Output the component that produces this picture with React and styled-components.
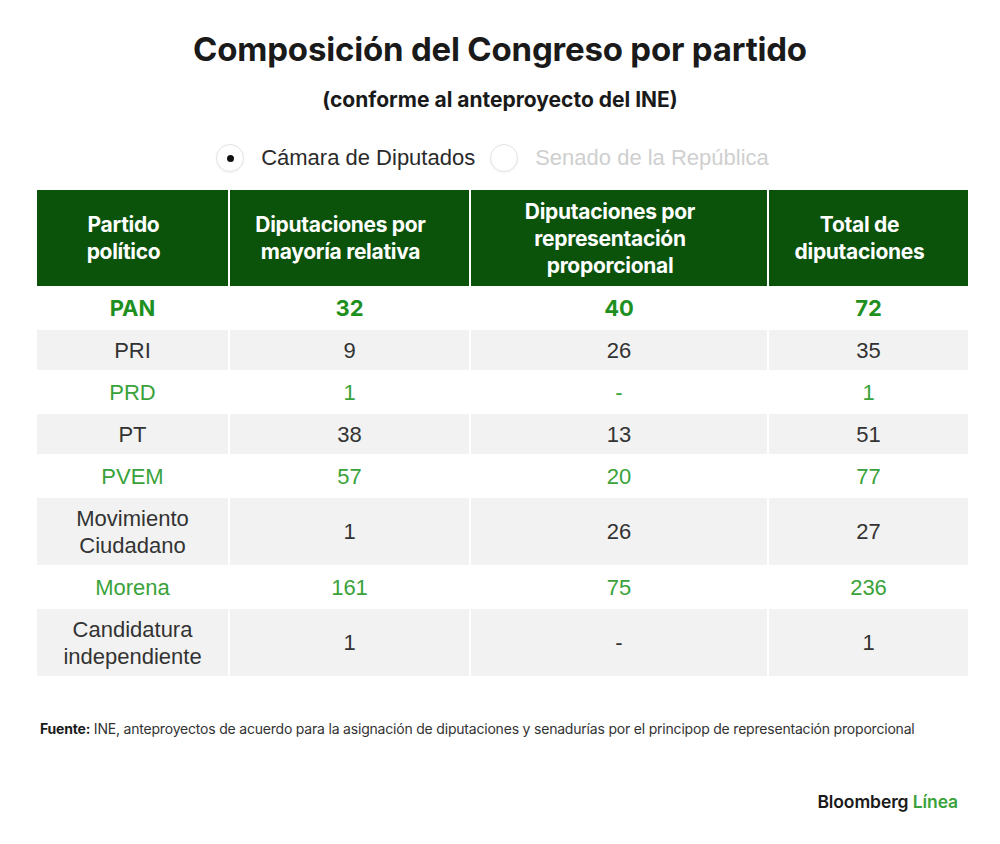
import React, { useState } from 'react';
import styled, { createGlobalStyle } from 'styled-components';

const GlobalStyle = createGlobalStyle`
  body {
    margin: 0;
    background: #fff;
    font-family: 'Liberation Sans', Arial, sans-serif;
  }
`;

const Page = styled.div`
  width: 1000px;
  padding-top: 29px;
  display: flex;
  flex-direction: column;
  align-items: center;
`;

const Title = styled.h1`
  font-family: Inter, 'Liberation Sans', sans-serif;
  font-size: 33px;
  font-weight: 700;
  letter-spacing: -0.2px;
  line-height: 40px;
  color: #1a1a1a;
  margin: 0;
`;

const Subtitle = styled.h2`
  font-family: Inter, 'Liberation Sans', sans-serif;
  font-size: 21px;
  font-weight: 700;
  letter-spacing: 0;
  line-height: 26px;
  color: #1a1a1a;
  margin: 18px 0 0;
`;

const Toggle = styled.div`
  display: flex;
  align-items: center;
  margin-top: 31px;
  height: 28px;
`;

const Option = styled.label`
  display: flex;
  align-items: center;
  gap: 17px;
  margin-right: 15px;
  font-size: 22px;
  color: ${p => (p.active ? '#2a2a2a' : '#cfcfcf')};
  cursor: pointer;
`;

const Radio = styled.span`
  width: 28px;
  height: 28px;
  box-sizing: border-box;
  border-radius: 50%;
  border: 1.5px solid #e2e2e2;
  box-shadow: 0 1px 2px rgba(0, 0, 0, 0.06);
  display: flex;
  align-items: center;
  justify-content: center;

  &::after {
    content: '';
    width: 7px;
    height: 7px;
    border-radius: 50%;
    background: ${p => (p.active ? '#111' : 'transparent')};
  }
`;

const Table = styled.div`
  margin-top: 18px;
  display: grid;
  grid-template-columns: 191px 239px 296px 199px;
  gap: 2px;
  align-self: flex-start;
  margin-left: 37px;
`;

const HeaderCell = styled.div`
  background: #0b520b;
  color: #fff;
  height: 96px;
  display: flex;
  align-items: center;
  justify-content: center;
  text-align: center;
  padding: 0 22px 0 4px;
  font-family: Inter, 'Liberation Sans', sans-serif;
  font-weight: 700;
  font-size: 21px;
  letter-spacing: -0.3px;
  line-height: 27px;
`;

const Cell = styled.div`
  background: ${p => (p.shaded ? '#f2f2f2' : '#fff')};
  color: ${p => (p.green ? (p.strong ? '#1f901f' : '#3aa23a') : '#333')};
  font-family: ${p => (p.strong ? "Inter, 'Liberation Sans', sans-serif" : "'Liberation Sans', Arial, sans-serif")};
  font-weight: ${p => (p.strong ? 700 : 400)};
  font-size: 22px;
  height: ${p => (p.tall ? '67px' : '40px')};
  line-height: 27px;
  display: flex;
  align-items: center;
  justify-content: center;
  text-align: center;
`;

const Source = styled.p`
  align-self: flex-start;
  margin: 44px 0 0 40px;
  font-family: Inter, 'Liberation Sans', sans-serif;
  font-size: 14px;
  letter-spacing: -0.2px;
  color: #333;

  b {
    color: #1a1a1a;
  }
`;

const Brand = styled.div`
  align-self: flex-end;
  margin: 54px 42px 0 0;
  font-family: Inter, 'Liberation Sans', sans-serif;
  font-size: 17.5px;
  font-weight: 600;
  letter-spacing: -0.1px;
  color: #1a1a1a;

  span {
    color: #3aa23a;
  }
`;

const headers = [
  ['Partido', 'político'],
  ['Diputaciones por', 'mayoría relativa'],
  ['Diputaciones por', 'representación', 'proporcional'],
  ['Total de', 'diputaciones'],
];

const rows = [
  { party: 'PAN', values: ['32', '40', '72'], green: true, strong: true },
  { party: 'PRI', values: ['9', '26', '35'] },
  { party: 'PRD', values: ['1', '-', '1'], green: true },
  { party: 'PT', values: ['38', '13', '51'] },
  { party: 'PVEM', values: ['57', '20', '77'], green: true },
  { party: ['Movimiento', 'Ciudadano'], values: ['1', '26', '27'] },
  { party: 'Morena', values: ['161', '75', '236'], green: true },
  { party: ['Candidatura', 'independiente'], values: ['1', '-', '1'] },
];

const lines = text =>
  Array.isArray(text)
    ? text.map((t, i) => (
        <React.Fragment key={i}>
          {i > 0 && <br />}
          {t}
        </React.Fragment>
      ))
    : text;

export default function App() {
  const [chamber, setChamber] = useState('diputados');

  return (
    <>
      <GlobalStyle />
      <Page>
        <Title>Composición del Congreso por partido</Title>
        <Subtitle>(conforme al anteproyecto del INE)</Subtitle>

        <Toggle>
          <Option active={chamber === 'diputados'} onClick={() => setChamber('diputados')}>
            <Radio active={chamber === 'diputados'} />
            Cámara de Diputados
          </Option>
          <Option active={chamber === 'senado'} onClick={() => setChamber('senado')}>
            <Radio active={chamber === 'senado'} />
            Senado de la República
          </Option>
        </Toggle>

        <Table>
          {headers.map((h, i) => (
            <HeaderCell key={i}>
              <div>{lines(h)}</div>
            </HeaderCell>
          ))}

          {rows.map((row, r) => {
            const tall = Array.isArray(row.party);
            const shaded = r % 2 === 1;
            return [row.party, ...row.values].map((v, c) => (
              <Cell
                key={`${r}-${c}`}
                shaded={shaded}
                tall={tall}
                green={row.green}
                strong={row.strong}
              >
                <div>{lines(v)}</div>
              </Cell>
            ));
          })}
        </Table>

        <Source>
          <b>Fuente:</b> INE, anteproyectos de acuerdo para la asignación de diputaciones y senadurías por el principop de representación proporcional
        </Source>

        <Brand>
          Bloomberg <span>Línea</span>
        </Brand>
      </Page>
    </>
  );
}
